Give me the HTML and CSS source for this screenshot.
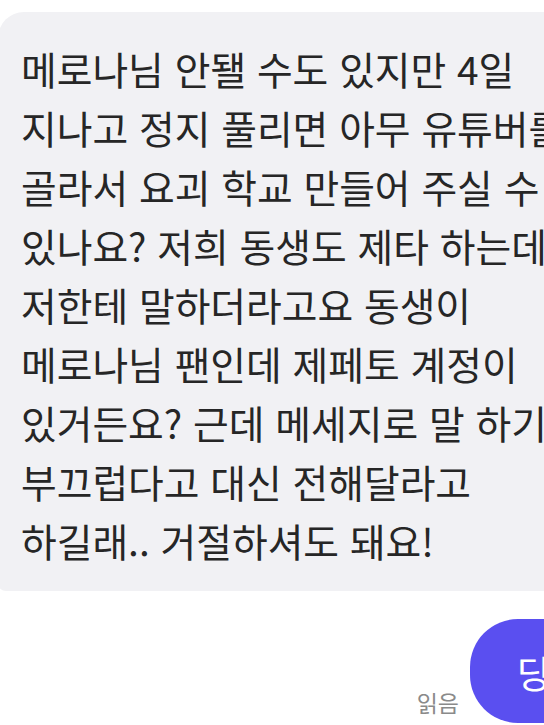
FILE: index.html
```html
<!DOCTYPE html>
<html lang="ko">
<head>
<meta charset="utf-8">
<link rel="stylesheet" href="styles.css">
</head>
<body>
<div class="chat">
  <div class="bubble-in">
    <div class="line">메로나님 안됄 수도 있지만 4일</div>
    <div class="line">지나고 정지 풀리면 아무 유튜버를</div>
    <div class="line">골라서 요괴 학교 만들어 주실 수</div>
    <div class="line">있나요? 저희 동생도 제타 하는데</div>
    <div class="line">저한테 말하더라고요 동생이</div>
    <div class="line">메로나님 팬인데 제페토 계정이</div>
    <div class="line">있거든요? 근데 메세지로 말 하기</div>
    <div class="line">부끄럽다고 대신 전해달라고</div>
    <div class="line">하길래.. 거절하셔도 돼요!</div>
  </div>
  <div class="out-row">
    <span class="read">읽음</span>
    <div class="bubble-out">당</div>
  </div>
</div>
</body>
</html>
```
FILE: styles.css
```css
html, body {
  margin: 0;
  padding: 0;
  background: #ffffff;
  overflow: hidden;
}
body {
  width: 544px;
  height: 725px;
  font-family: "Noto Sans CJK KR", "Noto Sans", sans-serif;
}
.chat {
  padding-top: 12px;
  display: flex;
  flex-direction: column;
  width: 544px;
}
.bubble-in {
  align-self: flex-start;
  margin-left: -2px;
  width: 700px;
  background: #f1f1f4;
  border-radius: 26px 26px 26px 8px;
  padding: 27px 0 21px 23px;
  color: #262626;
  font-size: 38.8px;
  line-height: 59px;
}
.line {
  white-space: nowrap;
}
.out-row {
  display: flex;
  justify-content: flex-end;
  align-items: flex-end;
  gap: 11px;
  margin-top: 28px;
  margin-right: -46px;
}
.read {
  font-size: 23px;
  color: #8a8a8a;
  line-height: 24px;
  margin-bottom: 9px;
}
.bubble-out {
  box-sizing: border-box;
  width: 120px;
  background: #5a4ff0;
  color: #ffffff;
  height: 104px;
  border-radius: 48px;
  padding: 0 0 0 47px;
  font-size: 38px;
  display: flex;
  align-items: center;
  white-space: nowrap;
}
```
